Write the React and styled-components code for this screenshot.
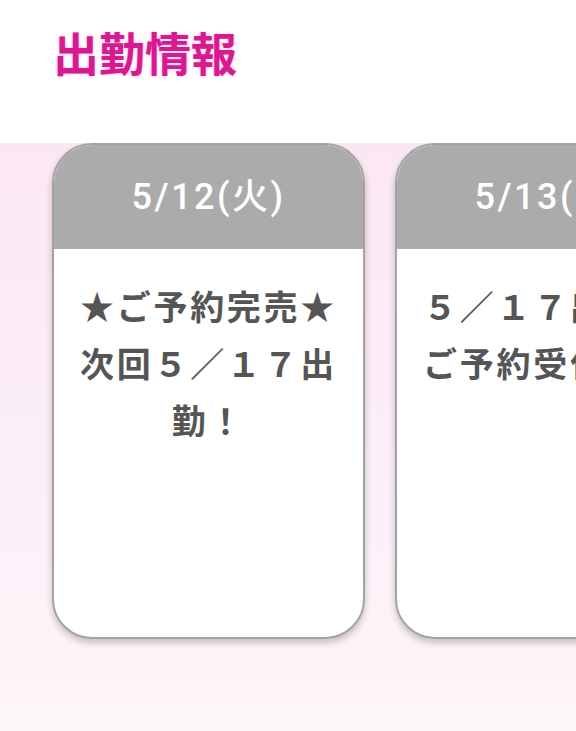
import React from 'react';
import styled, { createGlobalStyle } from 'styled-components';

const GlobalStyle = createGlobalStyle`
  html, body {
    margin: 0;
    padding: 0;
    height: 100%;
  }
  body {
    font-family: "Noto Sans CJK JP", "Noto Sans", sans-serif;
    background: #ffffff;
    overflow: hidden;
  }
  #root {
    height: 100%;
  }
`;

const shifts = [
  { date: '5/12(火)', note: '★ご予約完売★次回５／１７出勤！' },
  { date: '5/13(水)', note: '５／１７出勤！ご予約受付中！' },
];

function App() {
  return (
    <>
      <GlobalStyle />
      <Page>
        <Header>
          <Title>出勤情報</Title>
        </Header>
        <Schedule>
          {shifts.map((s) => (
            <Card key={s.date}>
              <CardHead>{s.date}</CardHead>
              <CardBody>{s.note}</CardBody>
            </Card>
          ))}
        </Schedule>
      </Page>
    </>
  );
}

const Page = styled.div`
  display: flex;
  flex-direction: column;
  height: 100%;
`;

const Header = styled.header`
  height: 143px;
  box-sizing: border-box;
  padding: 28px 0 0 53px;
`;

const Title = styled.h2`
  margin: 0;
  font-size: 46px;
  line-height: 1;
  font-weight: 700;
  color: #d61a90;
  text-shadow: 0 0 3px rgba(255, 120, 210, 0.55);
`;

const Schedule = styled.section`
  flex: 1;
  display: flex;
  gap: 30px;
  padding-left: 52px;
  overflow: hidden;
  background: linear-gradient(180deg, #fbe7f4 0%, #fcf0f8 60%, #fdf6fa 100%);
`;

const Card = styled.article`
  flex: 0 0 313px;
  height: 496px;
  box-sizing: border-box;
  display: flex;
  flex-direction: column;
  border: 2px solid #a3a3a3;
  border-radius: 40px;
  overflow: hidden;
  background: #ffffff;
  box-shadow: 0 4px 7px rgba(0, 0, 0, 0.22);
`;

const CardHead = styled.div`
  height: 104px;
  flex: 0 0 auto;
  display: flex;
  align-items: center;
  justify-content: center;
  padding-bottom: 8px;
  box-sizing: border-box;
  background: #ababab;
  color: #ffffff;
  font-family: Roboto, "Noto Sans CJK JP", sans-serif;
  font-size: 36px;
  font-weight: 500;
  letter-spacing: 2.5px;
`;

const CardBody = styled.div`
  padding: 28px 20px 0;
  text-align: center;
  color: #555555;
  font-size: 34px;
  line-height: 57px;
  font-weight: 700;
  letter-spacing: 2.7px;
  word-break: break-all;
`;

export default App;
